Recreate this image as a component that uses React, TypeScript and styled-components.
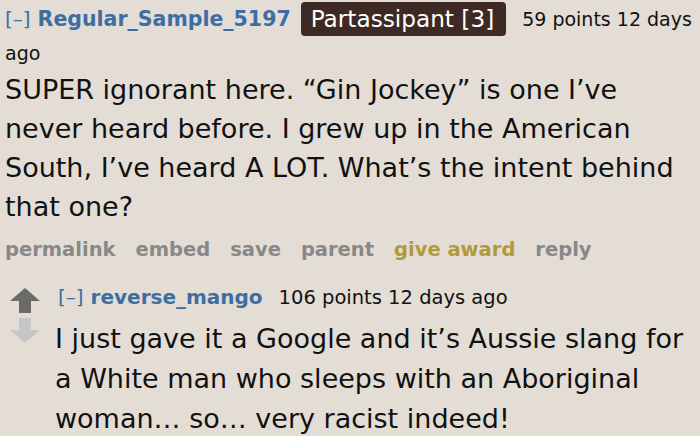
import React from "react";
import styled, { createGlobalStyle } from "styled-components";

const Global = createGlobalStyle`
  html, body { margin: 0; padding: 0; background: #e3ddd6; }
  body { font-family: "DejaVu Sans", Verdana, sans-serif; color: #111; }
`;

const Page = styled.div`
  width: 700px;
  height: 436px;
  overflow: hidden;
  padding: 0 0 0 5px;
  box-sizing: border-box;
`;

const Tagline = styled.div`
  font-size: 19px;
  line-height: 34px;
  margin-top: 2px;
`;

const Toggle = styled.span`
  color: #3d6ea2;
  font-size: 20px;
`;

const Author = styled.span<{ $size?: number }>`
  color: #3d6ea2;
  font-weight: bold;
  font-size: ${(p) => p.$size ?? 20}px;
  margin-left: 7px;
`;

const Flair = styled.span`
  display: inline-block;
  background: #3e2a22;
  color: #fff;
  font-size: 23.2px;
  line-height: 34px;
  padding: 0 12px 0 10px;
  border-radius: 4px;
  margin: 0 16px 0 10px;
  vertical-align: top;
`;

const Body = styled.div<{ $lh?: number }>`
  font-size: 27px;
  line-height: ${(p) => p.$lh ?? 39}px;
`;

const Actions = styled.div`
  display: flex;
  gap: 20px;
  font-weight: bold;
  font-size: 19.5px;
  line-height: 24px;
  margin-top: 12px;
`;

const Action = styled.span<{ $gold?: boolean }>`
  color: ${(p) => (p.$gold ? "#b09a3c" : "#888888")};
`;

const Child = styled.div`
  display: flex;
  margin-top: 22px;
`;

const Votes = styled.div`
  width: 50px;
  flex: none;
  display: flex;
  flex-direction: column;
  padding: 4px 0 0 5px;
  box-sizing: border-box;
  gap: 5px;
`;

const ChildMain = styled.div`
  flex: 1;
`;

const ChildTagline = styled.div`
  font-size: 19.5px;
  line-height: 26px;
  padding-left: 3px;
  margin-bottom: 8px;
`;

const Points = styled.span<{ $gap?: number }>`
  margin-left: ${(p) => p.$gap ?? 0}px;
`;

const Arrow = ({ up }: { up?: boolean }) => (
  <svg width="30" height="25" viewBox="0 0 30 25">
    {up ? (
      <path d="M15 0 L30 13 L21 13 L21 25 L9 25 L9 13 L0 13 Z" fill="#6a6a6a" />
    ) : (
      <path d="M9 0 L21 0 L21 12 L30 12 L15 25 L0 12 L9 12 Z" fill="#c6c6c6" />
    )}
  </svg>
);

export default function App() {
  return (
    <Page>
      <Global />
      <Tagline>
        <Toggle>[–]</Toggle>
        <Author $size={20.5}>Regular_Sample_5197</Author>
        <Flair>Partassipant [3]</Flair>
        <Points>59 points 12 days</Points>
        <br />
        <Points>ago</Points>
      </Tagline>
      <Body>
        SUPER ignorant here. “Gin Jockey” is one I’ve
        <br />
        never heard before. I grew up in the American
        <br />
        South, I’ve heard A LOT. What’s the intent behind
        <br />
        that one?
      </Body>
      <Actions>
        <Action>permalink</Action>
        <Action>embed</Action>
        <Action>save</Action>
        <Action>parent</Action>
        <Action $gold>give award</Action>
        <Action>reply</Action>
      </Actions>
      <Child>
        <Votes>
          <Arrow up />
          <Arrow />
        </Votes>
        <ChildMain>
          <ChildTagline>
            <Toggle>[–]</Toggle>
            <Author>reverse_mango</Author>
            <Points $gap={16}>106 points 12 days ago</Points>
          </ChildTagline>
          <Body $lh={40}>
            I just gave it a Google and it’s Aussie slang for
            <br />
            a White man who sleeps with an Aboriginal
            <br />
            woman… so… very racist indeed!
          </Body>
        </ChildMain>
      </Child>
    </Page>
  );
}
